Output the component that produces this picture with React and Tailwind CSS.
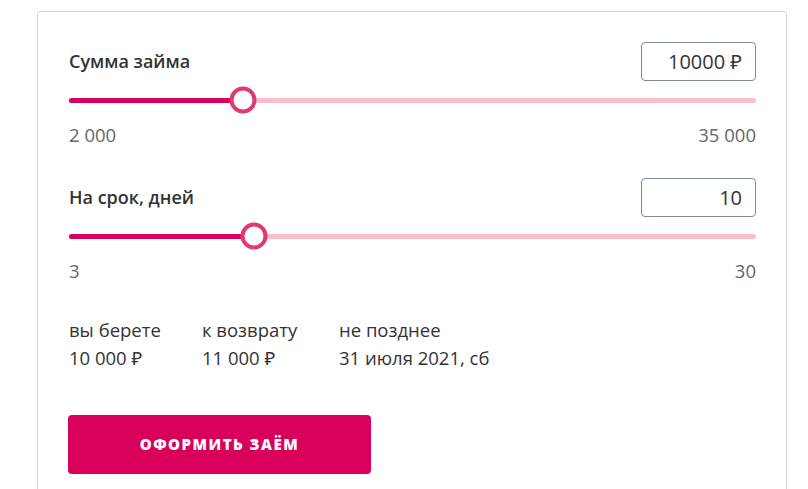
import { useState } from 'react';

const font = { fontFamily: '"Open Sans", "Noto Sans", sans-serif' };

// ползунок: заливка до центра бегунка
const Slider = ({ value, min, max }) => {
  const pct = (value - min) / (max - min);
  const left = `calc((100% - 27px) * ${pct} + 13.5px)`;
  return (
    <div className="relative h-[38px] flex items-center">
      <div className="w-full h-[5px] rounded-full bg-[#fbbdc8]" />
      <div className="absolute left-0 h-[5px] rounded-full bg-[#d6005e]" style={{ width: left }} />
      <div
        className="absolute top-1/2 w-[27px] h-[27px] -translate-x-1/2 -translate-y-1/2 rounded-full border-[4px] border-[#e0386f] bg-white"
        style={{ left }}
      />
    </div>
  );
};

const Field = ({ title, value, suffix, min, max, minLabel, maxLabel }) => (
  <div>
    <div className="flex items-center justify-between h-[39px]">
      <span className="text-[18px] font-semibold text-[#333]">{title}</span>
      <div className="w-[115px] h-[39px] border border-[#7f8b93] rounded-[4px] flex items-center justify-end px-[13px] text-[20px] text-[#333]">
        {value}{suffix}
      </div>
    </div>
    <Slider value={value} min={min} max={max} />
    <div className="mt-[4px] flex justify-between text-[18.5px] leading-[24px] text-[#666]">
      <span>{minLabel}</span>
      <span>{maxLabel}</span>
    </div>
  </div>
);

const App = () => {
  const [sum] = useState(10000);
  const [days] = useState(10);

  return (
    <div className="min-h-[489px] bg-white pt-[11px] pl-[37px]" style={font}>
      <div className="w-[750px] h-[490px] border border-[#d2d2d2] rounded-[3px] pl-[31px] pr-[30px] pt-[30px]">
        <Field title="Сумма займа" value={sum} suffix=" ₽" min={2000} max={35000} minLabel="2 000" maxLabel="35 000" />
        <div className="mt-[31px]">
          <Field title="На срок, дней" value={days} suffix="" min={3} max={30} minLabel="3" maxLabel="30" />
        </div>

        {/* итоги */}
        <div className="mt-[33px] flex text-[18.5px] leading-[28px] text-[#333]">
          <div className="w-[133px]">
            <div>вы берете</div>
            <div>10 000 ₽</div>
          </div>
          <div className="w-[137px]">
            <div>к возврату</div>
            <div>11 000 ₽</div>
          </div>
          <div>
            <div>не позднее</div>
            <div>31 июля 2021, сб</div>
          </div>
        </div>

        <button className="mt-[43px] w-[303px] h-[59px] rounded-[4px] bg-[#d8005a] text-white text-[15px] font-extrabold tracking-[1.5px] -ml-px">
          ОФОРМИТЬ ЗАЁМ
        </button>
      </div>
    </div>
  );
};

export default App;
